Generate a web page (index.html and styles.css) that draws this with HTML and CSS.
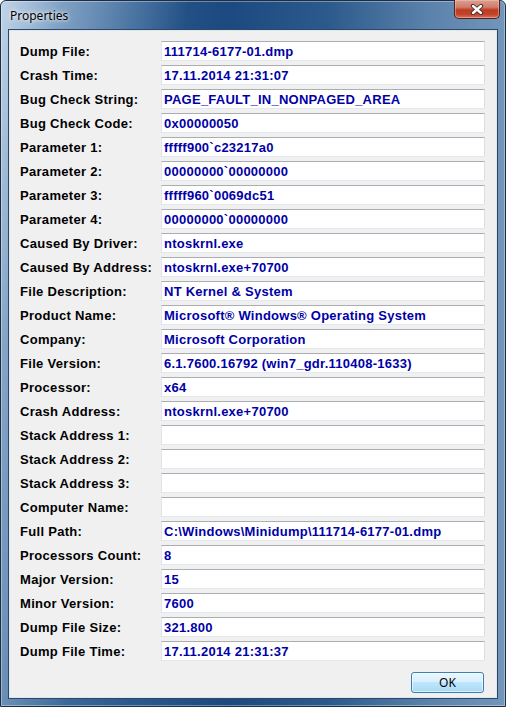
FILE: index.html
```html
<!DOCTYPE html>
<html>
<head>
<meta charset="utf-8">
<link rel="stylesheet" href="styles.css">
</head>
<body>
<div class="window">
  <div class="titlebar">
    <span class="title">Properties</span>
    <div class="close">
      <svg width="14" height="11" viewBox="0 0 14 11">
        <path d="M3 2 L11 9 M11 2 L3 9" stroke="#3a2a2a" stroke-width="4.2" stroke-linecap="round"/>
        <path d="M3 2 L11 9 M11 2 L3 9" stroke="#ffffff" stroke-width="2.4" stroke-linecap="round"/>
      </svg>
    </div>
  </div>
  <div class="client">
    <div class="grid">
      <div class="label">Dump File:</div><div class="field">111714-6177-01.dmp</div>
      <div class="label">Crash Time:</div><div class="field">17.11.2014 21:31:07</div>
      <div class="label">Bug Check String:</div><div class="field">PAGE_FAULT_IN_NONPAGED_AREA</div>
      <div class="label">Bug Check Code:</div><div class="field">0x00000050</div>
      <div class="label">Parameter 1:</div><div class="field">fffff900`c23217a0</div>
      <div class="label">Parameter 2:</div><div class="field">00000000`00000000</div>
      <div class="label">Parameter 3:</div><div class="field">fffff960`0069dc51</div>
      <div class="label">Parameter 4:</div><div class="field">00000000`00000000</div>
      <div class="label">Caused By Driver:</div><div class="field">ntoskrnl.exe</div>
      <div class="label">Caused By Address:</div><div class="field">ntoskrnl.exe+70700</div>
      <div class="label">File Description:</div><div class="field">NT Kernel &amp; System</div>
      <div class="label">Product Name:</div><div class="field">Microsoft® Windows® Operating System</div>
      <div class="label">Company:</div><div class="field">Microsoft Corporation</div>
      <div class="label">File Version:</div><div class="field">6.1.7600.16792 (win7_gdr.110408-1633)</div>
      <div class="label">Processor:</div><div class="field">x64</div>
      <div class="label">Crash Address:</div><div class="field">ntoskrnl.exe+70700</div>
      <div class="label">Stack Address 1:</div><div class="field"></div>
      <div class="label">Stack Address 2:</div><div class="field"></div>
      <div class="label">Stack Address 3:</div><div class="field"></div>
      <div class="label">Computer Name:</div><div class="field"></div>
      <div class="label">Full Path:</div><div class="field">C:\Windows\Minidump\111714-6177-01.dmp</div>
      <div class="label">Processors Count:</div><div class="field">8</div>
      <div class="label">Major Version:</div><div class="field">15</div>
      <div class="label">Minor Version:</div><div class="field">7600</div>
      <div class="label">Dump File Size:</div><div class="field">321.800</div>
      <div class="label">Dump File Time:</div><div class="field">17.11.2014 21:31:37</div>
    </div>
    <div class="actions">
      <button class="ok">OK</button>
    </div>
  </div>
</div>
</body>
</html>
```
FILE: styles.css
```css
html, body {
  margin: 0;
  padding: 0;
  background: #ffffff;
}
.window {
  width: 506px;
  height: 707px;
  box-sizing: border-box;
  border: 1px solid #1d2e44;
  border-radius: 6px 6px 0 0;
  padding: 0 7px 7px 7px;
  display: flex;
  flex-direction: column;
  background:
    linear-gradient(100deg, rgba(205,222,238,0.9) 0%, rgba(170,196,222,0.6) 10%, rgba(30,70,120,0) 30%),
    linear-gradient(90deg, #4f78a6 0%, #2b5a8e 25%, #1c4a80 45%, #2c5a8c 65%, #5b82ab 85%, #7396ba 100%);
  box-shadow: inset 0 0 0 1px rgba(255,255,255,0.35);
}
.titlebar {
  height: 28px;
  display: flex;
  align-items: flex-start;
  position: relative;
}
.title {
  font-family: "Noto Sans", "Open Sans", sans-serif;
  font-size: 12px;
  color: #000;
  margin-top: 6px;
  margin-left: 2px;
  text-shadow: 0 0 6px rgba(255,255,255,0.9), 0 0 3px rgba(255,255,255,0.9);
}
.close {
  position: absolute;
  right: -2px;
  top: -1px;
  width: 46px;
  height: 19px;
  box-sizing: border-box;
  border: 1px solid #4a2620;
  border-top: none;
  border-radius: 0 0 5px 5px;
  background: linear-gradient(180deg, #dca092 0%, #cf7c68 40%, #bf3a22 55%, #c2432b 80%, #d8735a 100%);
  box-shadow: inset 0 0 0 1px rgba(255,200,190,0.45);
  display: flex;
  align-items: center;
  justify-content: center;
}
.client {
  flex: 1;
  background: #f0f0f0;
  border: 1px solid #2b4968;
  box-shadow: inset 0 0 0 1px #dfe6ee;
  padding: 11px 12px 0 11px;
  display: flex;
  flex-direction: column;
}
.grid {
  display: grid;
  grid-template-columns: 141px 324px;
  grid-auto-rows: 20px;
  row-gap: 4px;
}
.label {
  font-family: "Liberation Sans", Arial, sans-serif;
  font-weight: bold;
  font-size: 13px;
  letter-spacing: 0.3px;
  color: #000;
  line-height: 21px;
  white-space: nowrap;
}
.field {
  font-family: "Liberation Sans", Arial, sans-serif;
  font-weight: bold;
  font-size: 13px;
  letter-spacing: 0.25px;
  color: #0000a8;
  background: #fff;
  box-sizing: border-box;
  height: 20px;
  line-height: 19px;
  padding-left: 2px;
  border: 1px solid #e3e9ef;
  border-top-color: #abadb3;
  border-left-color: #e2e3ea;
  border-right-color: #dbdfe6;
  white-space: nowrap;
  overflow: hidden;
}
.actions {
  display: flex;
  justify-content: flex-end;
  margin-top: 11px;
  padding-right: 1px;
}
.ok {
  width: 73px;
  height: 21px;
  box-sizing: border-box;
  border: 1px solid #3c7fb1;
  border-radius: 3px;
  background: linear-gradient(180deg, #eaf6fd 0%, #d9f0fc 45%, #bee6fd 50%, #a7d9f5 100%);
  box-shadow: inset 0 0 0 1px rgba(255,255,255,0.6);
  font-family: "Noto Sans", "Open Sans", sans-serif;
  font-size: 12px;
  color: #000;
  padding: 0;
  line-height: 18px;
}
```
